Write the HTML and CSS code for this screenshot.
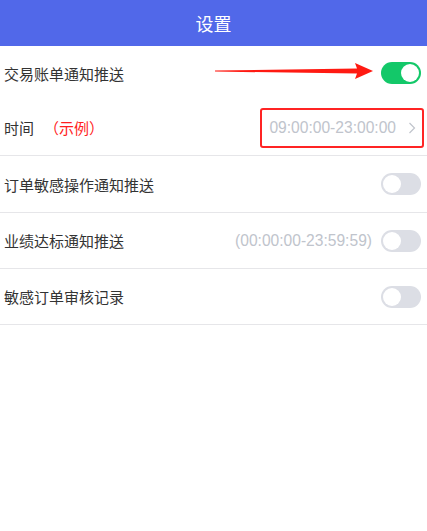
FILE: index.html
```html
<!DOCTYPE html>
<html lang="zh">
<head>
<meta charset="utf-8">
<link rel="stylesheet" href="styles.css">
</head>
<body>
<div class="header">设置</div>
<div class="list">
  <div class="row row-first">
    <span class="label">交易账单通知推送</span>
    <svg class="arrow" width="160" height="18" viewBox="0 0 160 18">
      <polygon points="0,7.6 142,5.5 140,0 158,8 140,16 142,10.5 0,8.6" fill="#ff1a12"/>
    </svg>
    <span class="toggle on"><span class="knob"></span></span>
  </div>
  <div class="row">
    <span class="label">时间<span class="example">（示例）</span></span>
    <span class="time-box">
      <span class="time">09:00:00-23:00:00</span>
      <svg class="chev" width="8" height="12" viewBox="0 0 8 12"><path d="M1.5 1 L6.5 6 L1.5 11" fill="none" stroke="#c0c4cc" stroke-width="1.2"/></svg>
    </span>
  </div>
  <div class="row row-third">
    <span class="label">订单敏感操作通知推送</span>
    <span class="toggle"><span class="knob"></span></span>
  </div>
  <div class="row">
    <span class="label">业绩达标通知推送</span>
    <span class="right">
      <span class="hint">(00:00:00-23:59:59)</span>
      <span class="toggle"><span class="knob"></span></span>
    </span>
  </div>
  <div class="row">
    <span class="label">敏感订单审核记录</span>
    <span class="toggle"><span class="knob"></span></span>
  </div>
</div>
</body>
</html>
```
FILE: styles.css
```css
html, body {
  margin: 0;
  padding: 0;
  background: #fff;
  font-family: "Liberation Sans", "Noto Sans CJK SC", sans-serif;
}
.header {
  height: 46px;
  background: #5168e9;
  color: #fff;
  font-size: 18px;
  display: flex;
  align-items: center;
  justify-content: center;
}
.row {
  height: 55px;
  border-bottom: 1px solid #e6e6e9;
  display: flex;
  align-items: center;
  justify-content: space-between;
  padding: 0 6px 0 4px;
  font-size: 15px;
  color: #333;
}
.row-first {
  height: 54px;
  border-bottom: none;
  position: relative;
}
.row-third {
  height: 56px;
}
.arrow {
  position: absolute;
  left: 215px;
  top: 17px;
}
.example {
  color: #ff1e1e;
  margin-left: 10px;
}
.toggle {
  width: 40px;
  height: 22px;
  border-radius: 11px;
  background: #dcdee5;
  display: flex;
  align-items: center;
  padding: 0 2px;
  box-sizing: border-box;
}
.knob {
  width: 18px;
  height: 18px;
  border-radius: 50%;
  background: #fff;
}
.toggle.on {
  background: #13c869;
  justify-content: flex-end;
}
.time-box {
  display: flex;
  align-items: center;
  gap: 12px;
  border: 2px solid #ff2424;
  border-radius: 3px;
  height: 40px;
  box-sizing: border-box;
  padding: 0 6px 0 7px;
  margin-right: -3px;
}
.time, .hint {
  color: #c0c4cc;
  font-size: 15.6px;
}
.right {
  display: flex;
  align-items: center;
  gap: 9px;
}
```
